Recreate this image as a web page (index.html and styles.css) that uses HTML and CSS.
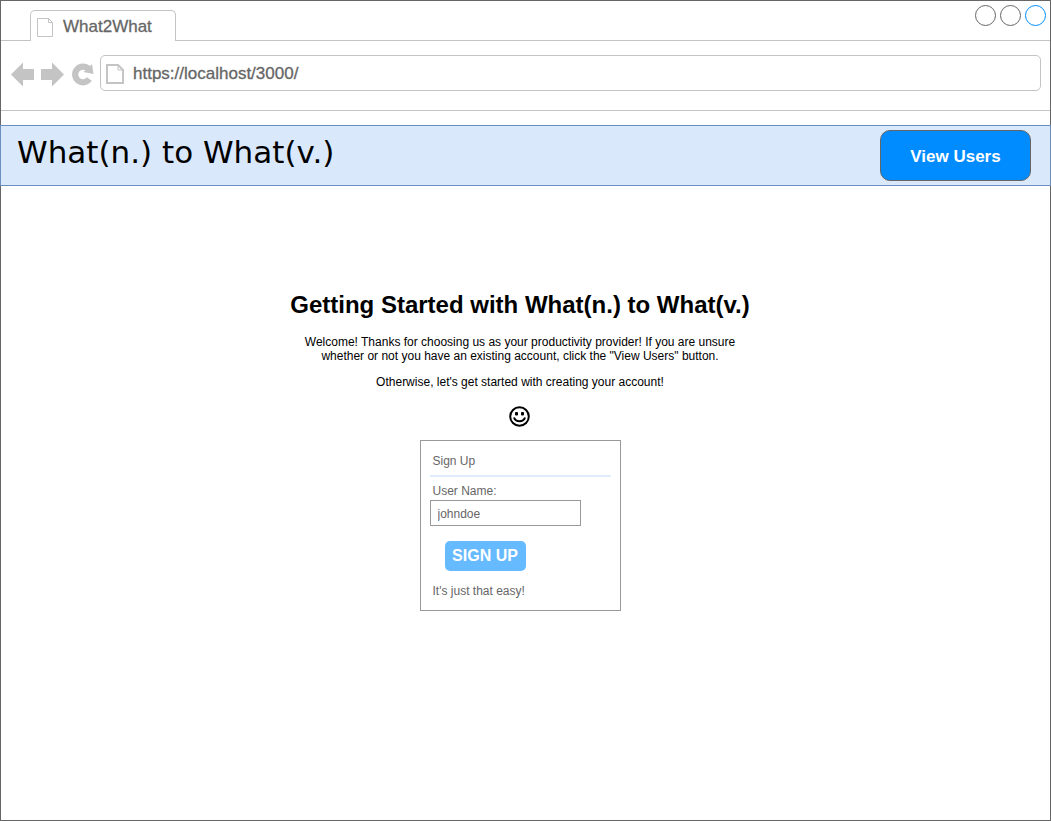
FILE: index.html
```html
<!DOCTYPE html>
<html lang="en">
<head>
<meta charset="utf-8">
<title>What2What</title>
<link rel="stylesheet" href="styles.css">
</head>
<body>
<div class="window">
  <div class="tabbar">
    <div class="tab">
      <svg class="tab-icon" width="16" height="19" viewBox="0 0 16 19" fill="none" stroke="#c4c4c4"><path d="M.5.5h11l4 4v14H.5zM11.5.5v4h4"/></svg>
      <span>What2What</span>
    </div>
    <svg class="controls" width="72" height="22" viewBox="0 0 72 22" fill="none" stroke="#666"><circle cx="10.500" cy="10.500" r="10"/><circle cx="35.500" cy="10.500" r="10"/><circle cx="60.500" cy="10.500" r="10" stroke="#008cff"/></svg>
  </div>
  <div class="toolbar">
    <svg class="nav" width="84" height="27" viewBox="0 0 84 27" fill="#c4c4c4">
      <path d="M0 15.500 12 3.500v6.500h11v11H12v6.500z"/>
      <path d="M53 15.500 41 3.500V10H30v11h11v6.500z"/>
      <path d="M77.500 10A7.800 7.800 0 1 0 78.300 20" fill="none" stroke="#c4c4c4" stroke-width="6.200"/>
      <path d="M81 5l1.500 10-10-2z"/>
    </svg>
    <label class="url">
      <svg width="18" height="20" viewBox="0 0 18 20" fill="none" stroke="#c4c4c4" stroke-width="2"><path d="M1 1h11l5 5v13H1z"/><path d="M12 1v5h5" stroke-width="1"/></svg>
      <input type="text" value="https://localhost/3000/" aria-label="Address">
    </label>
  </div>
  <header class="header">
    <div class="brand">What(n.) to What(v.)</div>
    <button class="view-users" type="button">View Users</button>
  </header>
  <main class="main">
    <h1>Getting Started with What(n.) to What(v.)</h1>
    <p>Welcome! Thanks for choosing us as your productivity provider! If you are unsure whether or not you have an existing account, click the "View Users" button.</p>
    <p>Otherwise, let's get started with creating your account!</p>
    <svg class="smiley" width="22" height="22" viewBox="0 0 22 22"><circle cx="10.500" cy="10.500" r="9.300" fill="none" stroke="#000" stroke-width="2"/><rect x="6" y="6" width="3" height="3.500" rx="1"/><rect x="12" y="6" width="3" height="3.500" rx="1"/><path d="M5 11.500c1.500 5 9.500 5 11 0" fill="none" stroke="#000" stroke-width="2"/></svg>
    <form class="card">
      <h2>Sign Up</h2>
      <label for="username">User Name:</label>
      <input id="username" type="text" value="johndoe">
      <button class="signup" type="button">SIGN UP</button>
      <div class="note">It's just that easy!</div>
    </form>
  </main>
</div>
</body>
</html>
```
FILE: styles.css
```css
* { box-sizing: border-box; }
body {
  margin: 0;
  background: #fff;
  font-family: "Liberation Sans", Arial, sans-serif;
  font-size: 12px;
  line-height: 14px;
  color: #000;
}
button, input { font-family: inherit; margin: 0; }
svg { display: block; flex: none; }
.window { min-height: 100vh; border: 1px solid #666; }
.tabbar {
  display: flex;
  justify-content: space-between;
  height: 40px;
  padding: 0 3px 0 29px;
  border-bottom: 1px solid #c4c4c4;
}
.tab {
  display: flex;
  align-items: center;
  gap: 10px;
  width: 146px;
  height: 31px;
  margin-top: 9px;
  padding: 2px 0 0 6px;
  border: 1px solid #c4c4c4;
  border-bottom: 0;
  border-radius: 5px 5px 0 0;
  background: #fff;
  color: #666;
  font-size: 17px;
  -webkit-text-stroke: 0.3px #666;
}
.controls { margin-top: 4px; }
.toolbar {
  display: flex;
  align-items: center;
  gap: 5px;
  height: 70px;
  padding: 0 9px 6px 10px;
  border-bottom: 1px solid #c4c4c4;
}
.url {
  display: flex;
  flex: 1;
  align-items: center;
  gap: 9px;
  height: 36px;
  padding: 2px 5px 0;
  border: 1px solid #c4c4c4;
  border-radius: 5px;
}
.url input {
  flex: 1;
  min-width: 0;
  padding: 0;
  border: 0;
  outline: 0;
  background: none;
  color: #666;
  font-size: 17px;
  -webkit-text-stroke: 0.3px #666;
}
.header {
  display: flex;
  justify-content: space-between;
  align-items: flex-start;
  margin: 14px -1px 0;
  padding: 4px 19px 4px 16px;
  border: 1px solid #6c8ebf;
  background: #dae8fc;
}
.brand {
  padding-top: 4px;
  font-family: "DejaVu Sans", Verdana, sans-serif;
  font-size: 31px;
  line-height: 36px;
}
.view-users {
  width: 151px;
  height: 51px;
  padding: 2px 0 0;
  border: 1px solid #666;
  border-radius: 10px;
  background: #008cff;
  color: #fff;
  font-size: 17px;
  font-weight: bold;
}
.main {
  display: flex;
  flex-direction: column;
  align-items: center;
  padding: 105px 11px 20px 0;
}
h1 { margin: 0 0 16px; font-size: 24px; line-height: 28px; }
p { max-width: 440px; margin: 0 0 12px; text-align: center; }
.smiley { margin: 5px 0 12px; }
.card {
  display: flex;
  flex-direction: column;
  align-items: flex-start;
  width: 201px;
  padding: 13px 9px 12px;
  border: 1px solid #999;
  color: #666;
}
.card h2 {
  width: 100%;
  margin: 0 0 7px;
  padding: 0 3px 7px;
  border-bottom: 2px solid #dfecfc;
  font-size: 12px;
  font-weight: normal;
}
.card label, .note { padding-left: 3px; }
.card input {
  width: 151px;
  height: 26px;
  margin-top: 2px;
  padding: 1px 7px 0;
  border: 1px solid #999;
  color: #666;
  font-size: 12px;
}
.signup {
  height: 30px;
  width: 81px;
  margin: 15px 0 13px 15px;
  padding: 0;
  border: 0;
  border-radius: 5px;
  background: #66baff;
  color: #fff;
  font-size: 16px;
  font-weight: bold;
}
```
